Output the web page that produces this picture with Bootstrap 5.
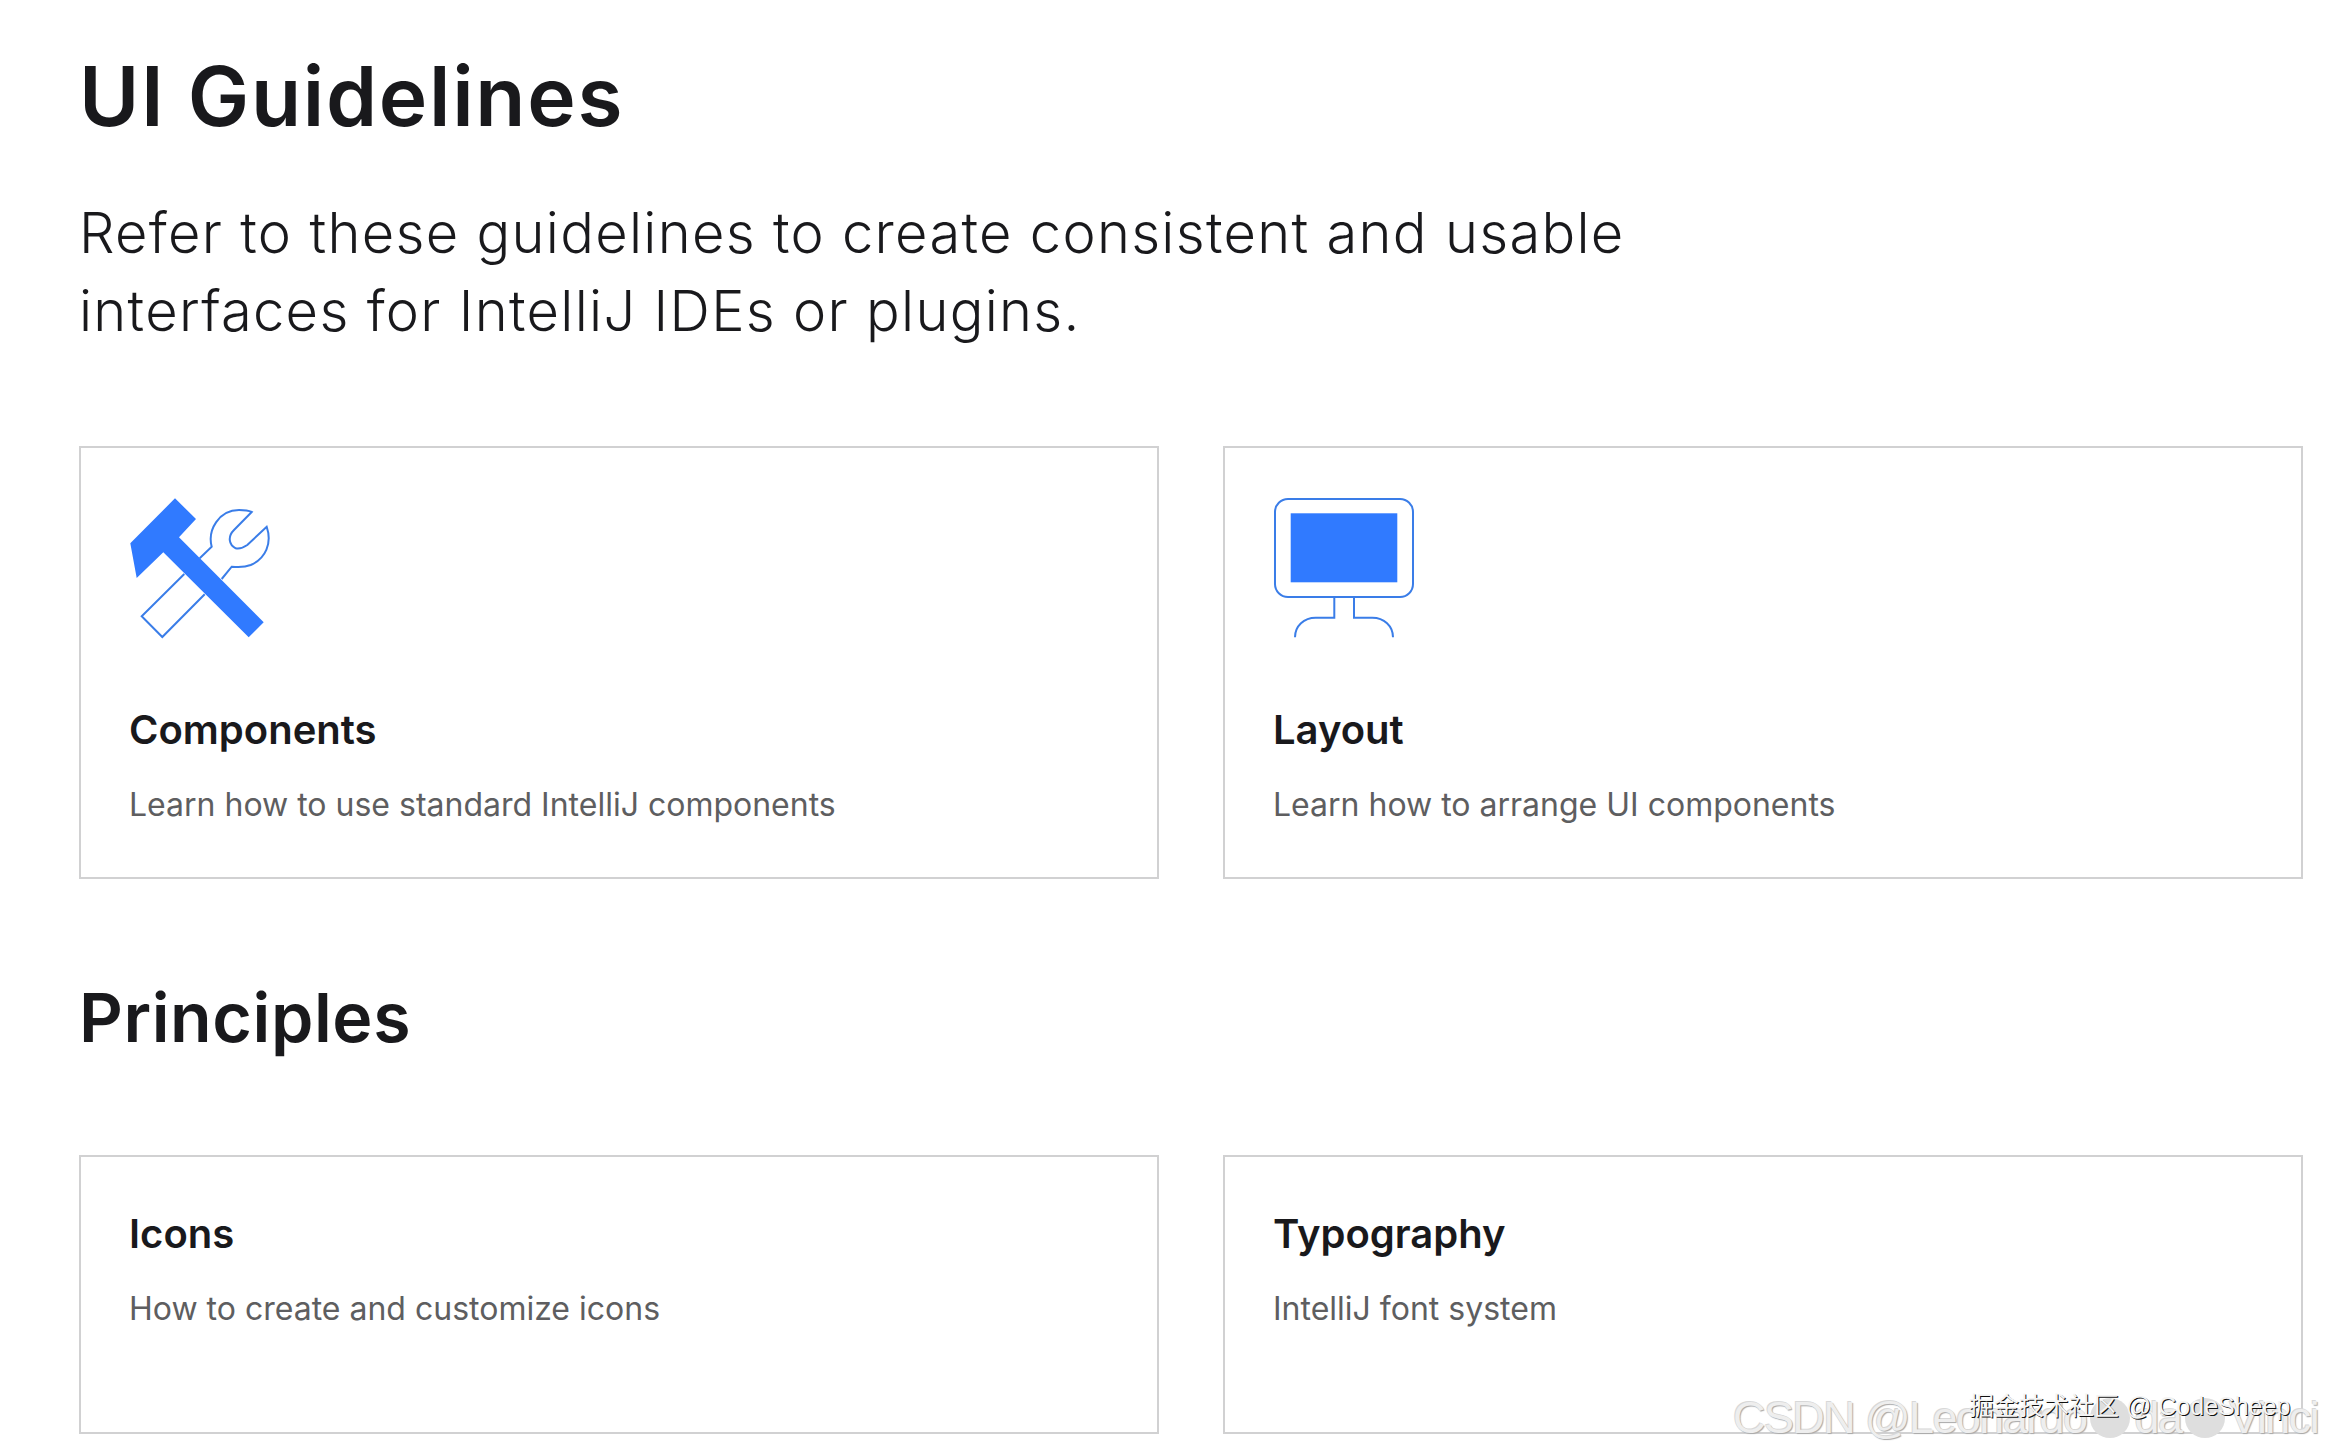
<!DOCTYPE html>
<html lang="en">
<head>
  <meta charset="UTF-8">
  <title>UI Guidelines</title>
  <meta name="viewport" content="width=device-width, initial-scale=1">
  <link href="https://cdn.jsdelivr.net/npm/bootstrap@5.3.3/dist/css/bootstrap.min.css" rel="stylesheet">
  <style>
    html, body {
      height: 100%;
      overflow: hidden;
    }
    body {
      font-family: Inter, "Liberation Sans", sans-serif;
      color: #19191c;
      background-color: #fff;
    }
    .page-wrap {
      padding: 50px 23px 0 79px;
    }
    .page-title {
      font-size: 82px;
      line-height: 94px;
      font-weight: 600;
      letter-spacing: 1.7px;
      margin-bottom: 50px;
    }
    .page-intro {
      font-size: 56px;
      line-height: 78px;
      font-weight: 300;
      letter-spacing: 1.3px;
      max-width: 1650px;
      margin-bottom: 96px;
    }
    .section-title {
      font-size: 68px;
      line-height: 80px;
      font-weight: 600;
      letter-spacing: .6px;
      margin-top: 98px;
      margin-bottom: 98px;
    }
    .guide-row {
      --bs-gutter-x: 64px;
      --bs-gutter-y: 0;
    }
    .guide-card {
      border: 2px solid #d1d1d2;
      border-radius: 0;
      padding: 50px 48px 0;
      background: #fff;
    }
    .guide-card.tall {
      height: 433px;
    }
    .guide-card.short {
      height: 279px;
      padding-top: 53px;
    }
    .guide-icon {
      display: block;
      width: 142px;
      height: 142px;
      margin-bottom: 66px;
    }
    .guide-name {
      font-size: 40px;
      line-height: 48px;
      font-weight: 600;
      margin-bottom: 27px;
    }
    .guide-text {
      font-size: 32px;
      line-height: 48px;
      color: #5e5e60;
      margin: 0;
    }
    .fill-blue { fill: #307aff; }
    .line-blue { fill: none; stroke: #3a7de8; stroke-width: 2; }
    .mark-csdn {
      position: absolute;
      left: 1733px;
      top: 1392px;
      display: flex;
      align-items: center;
      font-family: "Liberation Sans", sans-serif;
      font-size: 45px;
      line-height: 52px;
      letter-spacing: -1.6px;
      white-space: nowrap;
      color: #eeeeee;
      text-shadow: 1px 1px 1px #a8a8a8, -1px -1px 0 #d8d8d8;
    }
    .mark-dot {
      width: 40px;
      height: 40px;
      margin: 0 4px;
      border-radius: 50%;
      background: #dedede;
    }
    .mark-juejin {
      position: absolute;
      left: 1969px;
      top: 1391px;
      font-family: "Liberation Sans", "Noto Sans CJK SC", sans-serif;
      font-size: 25px;
      line-height: 30px;
      white-space: nowrap;
      color: #f4f4f4;
      text-shadow: 1px 1px 0 #111;
    }
  </style>
</head>
<body>
  <div class="page-wrap">
    <h1 class="page-title">UI Guidelines</h1>
    <p class="page-intro">Refer to these guidelines to create consistent and usable interfaces for IntelliJ IDEs or plugins.</p>

    <div class="row guide-row">
      <div class="col-6">
        <div class="guide-card tall">
          <svg class="guide-icon" viewBox="0 0 142 142">
            <path class="line-blue" d="M75.7 96.3 L33.3 139 L12.7 118.3 L55.3 76 M70.7 60.3 L82.7 48.7 C78.3 32 90 12 110 12 C115 12 120 12.7 122.7 14 L105 32 C98.3 38.7 100 47 106.7 50.3 C111.7 51.3 115 49.3 118.3 47 L137.7 28.7 C143.3 45.3 136.7 60.3 121.7 67 C115 69.7 108.3 69.3 102.7 68.7 L92.7 81"/>
            <polygon class="fill-blue" points="46,0.3 67,21 50,39.3 134.7,124.3 119.7,139.3 34.3,54.3 7.7,80 1.3,45.3"/>
          </svg>
          <h2 class="guide-name">Components</h2>
          <p class="guide-text">Learn how to use standard IntelliJ components</p>
        </div>
      </div>
      <div class="col-6">
        <div class="guide-card tall">
          <svg class="guide-icon" viewBox="0 0 142 142">
            <rect class="line-blue" x="2" y="1" width="138" height="98" rx="13"/>
            <rect class="fill-blue" x="17.7" y="15.3" width="106.6" height="69"/>
            <path class="line-blue" d="M61.3 99 V119.7 H42.7 C31 119.7 22 128 22 139.3 M81 99 V119.7 H99.3 C111 119.7 120 128 120 139.3"/>
          </svg>
          <h2 class="guide-name">Layout</h2>
          <p class="guide-text">Learn how to arrange UI components</p>
        </div>
      </div>
    </div>

    <h2 class="section-title">Principles</h2>

    <div class="row guide-row">
      <div class="col-6">
        <div class="guide-card short">
          <h2 class="guide-name">Icons</h2>
          <p class="guide-text">How to create and customize icons</p>
        </div>
      </div>
      <div class="col-6">
        <div class="guide-card short">
          <h2 class="guide-name">Typography</h2>
          <p class="guide-text">IntelliJ font system</p>
        </div>
      </div>
    </div>
  </div>

  <div class="mark-csdn">
    <span>CSDN @Leonardo</span>
    <span class="mark-dot"></span>
    <span>da</span>
    <span class="mark-dot"></span>
    <span>Vinci</span>
  </div>
  <div class="mark-juejin">掘金技术社区 @ CodeSheep</div>

  <script src="https://cdn.jsdelivr.net/npm/bootstrap@5.3.3/dist/js/bootstrap.bundle.min.js"></script>
</body>
</html>
